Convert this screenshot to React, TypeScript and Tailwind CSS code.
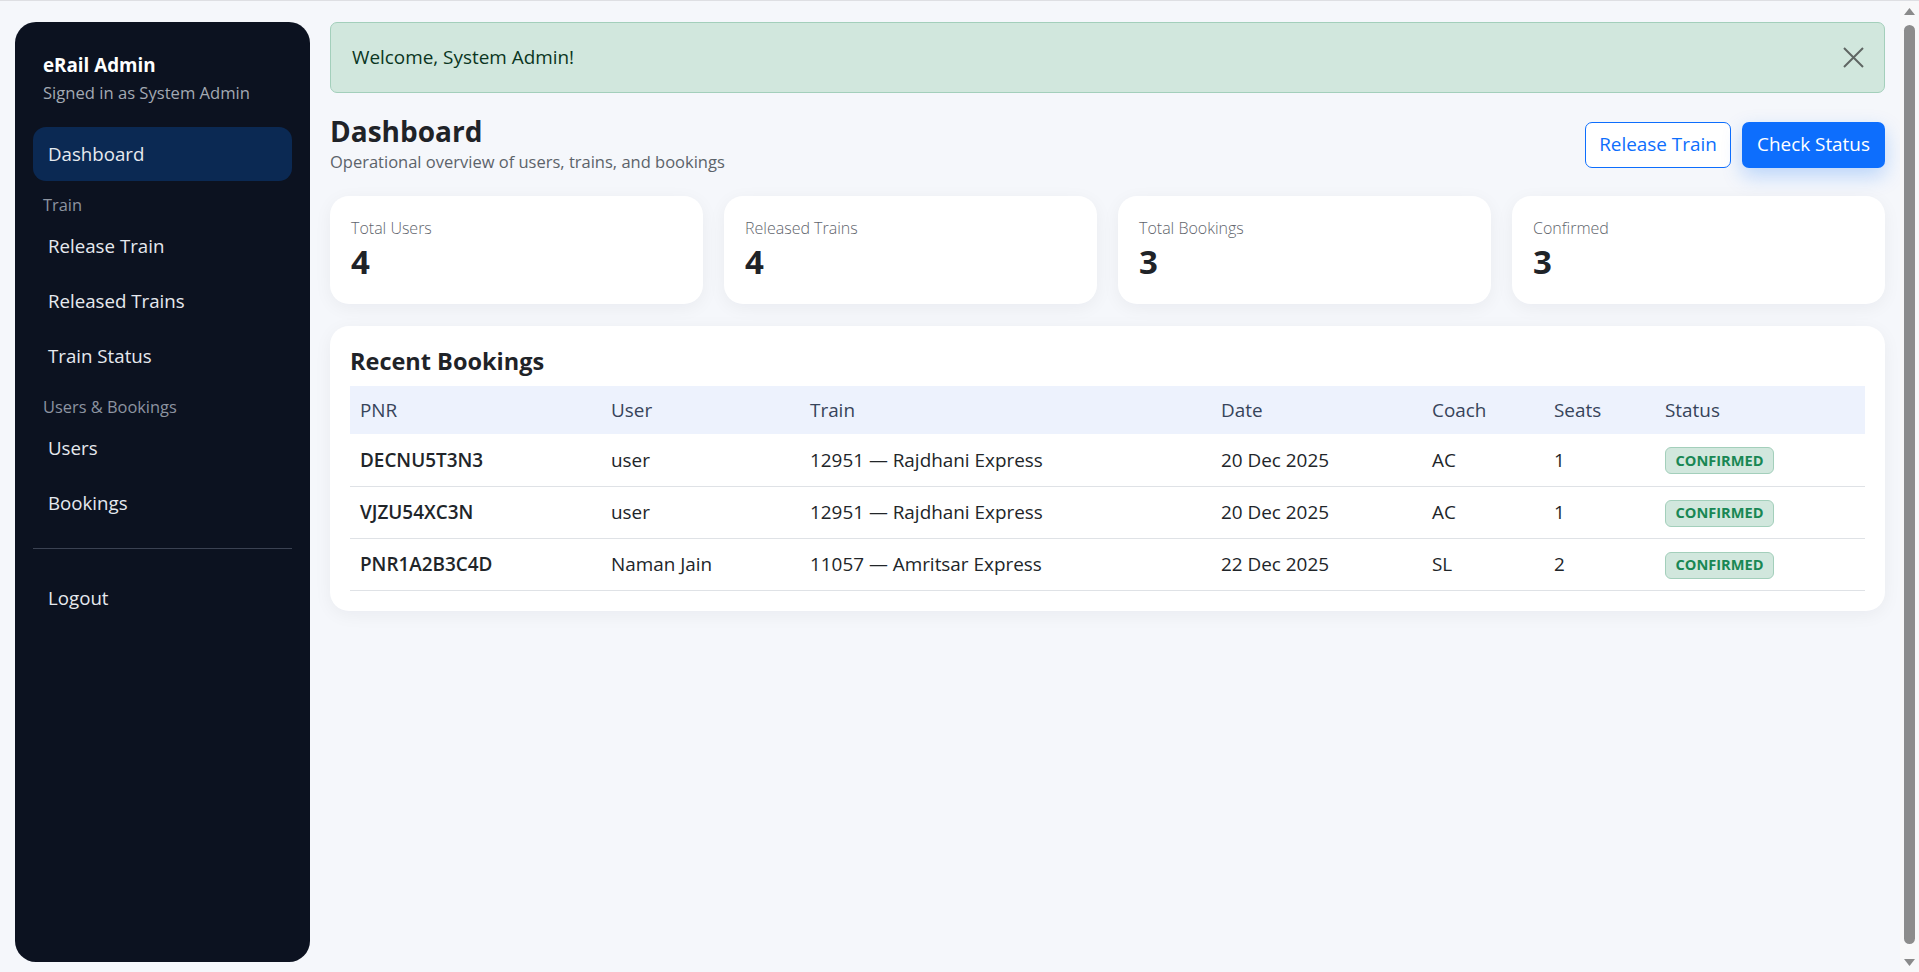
const font = { fontFamily: '"Open Sans", "Noto Sans", Arial, sans-serif' };

const cls = (...xs: Array<string | false | null | undefined>) => xs.filter(Boolean).join(" ");

type Booking = {
    pnr: string;
    user: string;
    train: string;
    date: string;
    coach: string;
    seats: number;
    status: string;
};

const bookings: Booking[] = [
    { pnr: "DECNU5T3N3", user: "user", train: "12951 — Rajdhani Express", date: "20 Dec 2025", coach: "AC", seats: 1, status: "CONFIRMED" },
    { pnr: "VJZU54XC3N", user: "user", train: "12951 — Rajdhani Express", date: "20 Dec 2025", coach: "AC", seats: 1, status: "CONFIRMED" },
    { pnr: "PNR1A2B3C4D", user: "Naman Jain", train: "11057 — Amritsar Express", date: "22 Dec 2025", coach: "SL", seats: 2, status: "CONFIRMED" },
];

const stats = [
    { label: "Total Users", value: 4 },
    { label: "Released Trains", value: 4 },
    { label: "Total Bookings", value: 3 },
    { label: "Confirmed", value: 3 },
];

function NavItem({ label, active }: { label: string; active?: boolean }) {
    return (
        <a
            href="#"
            className={cls(
                "flex h-[54px] items-center rounded-[13px] px-[15px] mb-px text-[18.7px] text-[#e6e9ef]",
                active && "bg-[#0b2953]"
            )}
        >
            {label}
        </a>
    );
}

function SectionLabel({ children }: { children: string }) {
    return (
        <div className="mt-[13px] mb-[3px] h-[22px] px-[10px] text-[16.4px] leading-[22px] text-[#8d94a0]">{children}</div>
    );
}

function Sidebar() {
    return (
        <aside className="h-[940px] w-[295px] shrink-0 rounded-[21px] bg-[#0c1220] px-[18px] pt-[30px]">
            <div className="px-[10px]">
                <div className="text-[18.8px] font-bold leading-[26px] text-white">eRail Admin</div>
                <div className="mt-[3px] text-[16.6px] leading-[24px] text-[#a3a9b3]">Signed in as System Admin</div>
            </div>
            <nav className="mt-[22px]">
                <NavItem label="Dashboard" active />
                <SectionLabel>Train</SectionLabel>
                <NavItem label="Release Train" />
                <NavItem label="Released Trains" />
                <NavItem label="Train Status" />
                <SectionLabel>Users &amp; Bookings</SectionLabel>
                <NavItem label="Users" />
                <NavItem label="Bookings" />
            </nav>
            <div className="mt-[18px] border-t border-[#3b4252]" />
            <div className="mt-[22px]">
                <NavItem label="Logout" />
            </div>
        </aside>
    );
}

function StatCard({ label, value }: { label: string; value: number }) {
    return (
        <div className="rounded-[19px] bg-white px-[21px] pt-[20px] pb-[20px] shadow-[0_4px_18px_rgba(15,23,42,0.05)]">
            <div className="text-[16px] font-light leading-[24px] text-[#5f656d]">{label}</div>
            <div className="text-[33px] font-bold leading-[44px] text-[#1f2328]">{value}</div>
        </div>
    );
}

function BookingsTable() {
    const th = "px-[10px] text-left font-medium";
    return (
        <table className="w-full table-fixed border-collapse text-[18.9px]">
            <colgroup>
                <col className="w-[251px]" />
                <col className="w-[199px]" />
                <col className="w-[411px]" />
                <col className="w-[211px]" />
                <col className="w-[122px]" />
                <col className="w-[111px]" />
                <col />
            </colgroup>
            <thead>
                <tr className="h-[48px] bg-[#edf2fd] text-[#37445a]">
                    <th className={th}>PNR</th>
                    <th className={th}>User</th>
                    <th className={th}>Train</th>
                    <th className={th}>Date</th>
                    <th className={th}>Coach</th>
                    <th className={th}>Seats</th>
                    <th className={th}>Status</th>
                </tr>
            </thead>
            <tbody className="text-[#212529]">
                {bookings.map((b) => (
                    <tr key={b.pnr} className="h-[52px] border-b border-[#dfe2e6]">
                        <td className="px-[10px] font-semibold">{b.pnr}</td>
                        <td className="px-[10px]">{b.user}</td>
                        <td className="px-[10px]">{b.train}</td>
                        <td className="px-[10px]">{b.date}</td>
                        <td className="px-[10px]">{b.coach}</td>
                        <td className="px-[10px]">{b.seats}</td>
                        <td className="px-[10px]">
                            <span className="inline-flex h-[27px] w-[109px] items-center justify-center rounded-[6px] border border-[#a3cfbb] bg-[#d1e7dd] text-[14.6px] font-bold text-[#198754]">
                                {b.status}
                            </span>
                        </td>
                    </tr>
                ))}
            </tbody>
        </table>
    );
}

// the reference shows the browser's classic scrollbar on the right edge
function ScrollStrip() {
    return (
        <div className="flex w-[19px] shrink-0 flex-col items-center bg-[#f8f8f9] pt-[7px] pb-[6px]">
            <svg width="11" height="7" viewBox="0 0 11 7">
                <path d="M5.5 0L11 7H0z" fill="#8a8a8a" />
            </svg>
            <div className="mt-[10px] w-[11px] flex-1 rounded-full bg-[#8c8c8c]" />
            <svg className="mt-[15px]" width="11" height="7" viewBox="0 0 11 7">
                <path d="M0 0h11L5.5 7z" fill="#8a8a8a" />
            </svg>
        </div>
    );
}

export default function App() {
    return (
        <div style={font} className="flex h-screen border-t border-[#dedfe3] bg-[#f5f7fb]">
            <div className="flex min-w-0 flex-1 gap-[20px] pl-[15px] pr-[15px] pt-[21px]">
                <Sidebar />
                <main className="min-w-0 flex-1">
                    <div className="flex h-[71px] items-center justify-between rounded-[7px] border border-[#a3cfbb] bg-[#d1e7dd] pl-[21px] pr-[19px] text-[18.9px] text-[#0a3622]">
                        <span>Welcome, System Admin!</span>
                        <button type="button" aria-label="Close" className="grid h-[24px] w-[24px] place-items-center">
                            <svg width="21" height="21" viewBox="0 0 21 21" fill="none" stroke="#5f6663" strokeWidth="2">
                                <path d="M1 1l19 19M20 1L1 20" />
                            </svg>
                        </button>
                    </div>

                    <div className="mt-[21px] flex items-center justify-between">
                        <div>
                            <h1 className="text-[28px] font-bold leading-[35px] text-[#1f2328]">Dashboard</h1>
                            <p className="text-[16.5px] leading-[26px] text-[#5c636a]">Operational overview of users, trains, and bookings</p>
                        </div>
                        <div className="flex gap-[11px]">
                            <button
                                type="button"
                                className="h-[46px] w-[146px] rounded-[7px] border border-[#0d6efd] bg-white text-[18.9px] text-[#0d6efd]"
                            >
                                Release Train
                            </button>
                            <button
                                type="button"
                                className="h-[46px] w-[143px] rounded-[7px] bg-[#0d6efd] text-[18.9px] text-white shadow-[0_8px_20px_rgba(13,110,253,0.25)]"
                            >
                                Check Status
                            </button>
                        </div>
                    </div>

                    <div className="mt-[21px] grid grid-cols-4 gap-[21px]">
                        {stats.map((s) => (
                            <StatCard key={s.label} label={s.label} value={s.value} />
                        ))}
                    </div>

                    <section className="mt-[22px] rounded-[19px] bg-white px-[20px] pt-[20px] pb-[20px] shadow-[0_4px_18px_rgba(15,23,42,0.05)]">
                        <h2 className="text-[23.5px] font-bold leading-[30px] text-[#1f2328]">Recent Bookings</h2>
                        <div className="mt-[10px]">
                            <BookingsTable />
                        </div>
                    </section>
                </main>
            </div>
            <ScrollStrip />
        </div>
    );
}
